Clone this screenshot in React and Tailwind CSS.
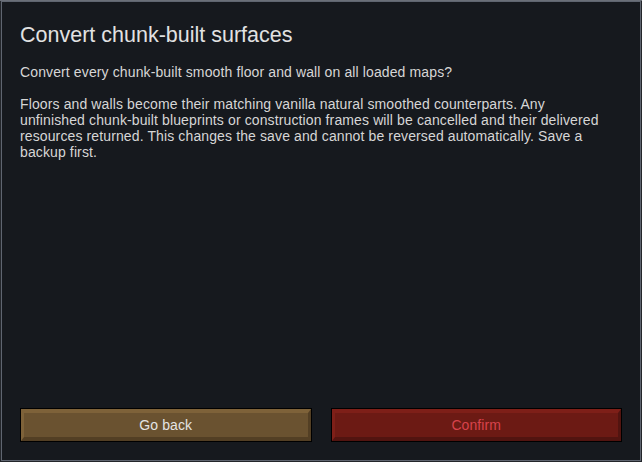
import React from 'react';

const Button = ({ label, variant }) => {
  const styles =
    variant === 'danger'
      ? 'bg-[#6c1a14] border-t-[#7e1f18] border-l-[#7e1f18] border-b-[#521410] border-r-[#521410] text-[#d8434c]'
      : 'bg-[#6a5230] border-t-[#7e6239] border-l-[#7e6239] border-b-[#533f24] border-r-[#533f24] text-[#e4e4e4]';
  return (
    <div className="flex-1 border border-black">
      <button
        className={`w-full h-[32px] flex items-center justify-center border-t-[4px] border-b-[4px] border-l-[3px] border-r-[3px] text-[14px] tracking-[0.1px] ${styles}`}
      >
        {label}
      </button>
    </div>
  );
};

const App = () => {
  return (
    <div
      className="w-[642px] h-[462px] bg-[#23262b] p-[1px] border-t border-[#6a6f78]"
      style={{ fontFamily: '"Liberation Sans", Arial, sans-serif' }}
    >
      <div className="w-[640px] h-[460px] -mt-[1px] bg-[#16191e] border border-[#5f6570] p-[18px] flex flex-col">
        <h1 className="text-[21.5px] leading-[24px] text-[#e2e2e2] mt-[3px]">Convert chunk-built surfaces</h1>
        <div className="w-[588px] text-[14px] leading-[16px] tracking-[0.12px] text-[#d6d6d6]">
          <p className="mt-[17px]">Convert every chunk-built smooth floor and wall on all loaded maps?</p>
          <p className="mt-[16px]">
            Floors and walls become their matching vanilla natural smoothed counterparts. Any unfinished chunk-built
            blueprints or construction frames will be cancelled and their delivered resources returned. This changes
            the save and cannot be reversed automatically. Save a backup first.
          </p>
        </div>
        <div className="mt-auto flex gap-[19px]">
          <Button label="Go back" />
          <Button label="Confirm" variant="danger" />
        </div>
      </div>
    </div>
  );
};

export default App;
